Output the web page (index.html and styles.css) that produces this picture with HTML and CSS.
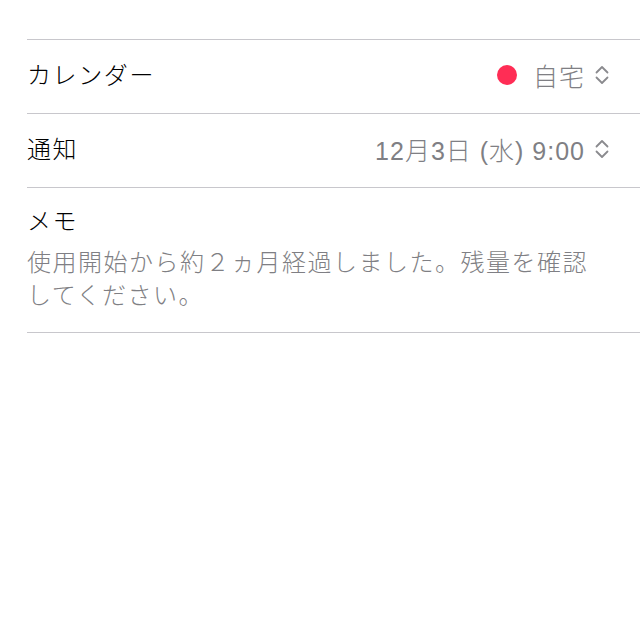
FILE: index.html
```html
<!DOCTYPE html>
<html lang="ja">
<head>
    <meta charset="UTF-8">
    <meta name="viewport" content="width=device-width, initial-scale=1.0">
    <title>イベントの詳細</title>
    <link rel="stylesheet" href="styles.css">
</head>
<body>

    <div class="list">
        <div class="row row-top">
            <span class="placeholder">URL</span>
        </div>

        <div class="row">
            <span class="label">カレンダー</span>
            <span class="value">
                <span class="dot"></span>
                <span>自宅</span>
                <svg class="updown" width="14" height="20" viewBox="0 0 14 20">
                    <path d="M1.5 7.5 L7 2 L12.5 7.5 M1.5 12.5 L7 18 L12.5 12.5" fill="none" stroke="#8a8a8e" stroke-width="1.8" stroke-linecap="round" stroke-linejoin="round"/>
                </svg>
            </span>
        </div>

        <div class="row">
            <span class="label">通知</span>
            <span class="value">
                <span>12月3日 (水) 9:00</span>
                <svg class="updown" width="14" height="20" viewBox="0 0 14 20">
                    <path d="M1.5 7.5 L7 2 L12.5 7.5 M1.5 12.5 L7 18 L12.5 12.5" fill="none" stroke="#8a8a8e" stroke-width="1.8" stroke-linecap="round" stroke-linejoin="round"/>
                </svg>
            </span>
        </div>

        <div class="memo">
            <div class="label">メモ</div>
            <p class="memo-text">使用開始から約２ヵ月経過しました。残量を確認してください。</p>
        </div>
    </div>

</body>
</html>
```

FILE: styles.css
```css
body {
    font-family: "Liberation Sans", "Noto Sans CJK JP", sans-serif;
    font-weight: 300;
    background-color: #fff;
    margin: 0;
    padding: 0;
    overflow: hidden;
}

.list {
    margin-left: 27px;
}

.row {
    display: flex;
    align-items: center;
    justify-content: space-between;
    box-sizing: border-box;
    height: 74px;
    padding: 0 31px 3px 0;
    border-bottom: 1px solid #c8c7cc;
}

.row-top {
    margin-top: -34px;
}

.placeholder {
    font-size: 24px;
    color: #c4c4c7;
    padding-left: 3px;
    position: relative;
    top: -12px;
}

.label {
    font-size: 24px;
    color: #000;
    line-height: 33px;
    letter-spacing: 1.6px;
}

.value {
    display: flex;
    align-items: center;
    font-size: 25px;
    color: #7f7f84;
    letter-spacing: 1px;
}

.dot {
    width: 20px;
    height: 20px;
    border-radius: 50%;
    background-color: #ff2d55;
    margin-right: 16px;
}

.updown {
    margin-left: 10px;
}

.memo {
    padding: 17px 31px 20px 0;
    border-bottom: 1px solid #c8c7cc;
}

.memo-text {
    margin: 8px 0 0;
    font-size: 24px;
    line-height: 33px;
    color: #7f7f84;
    letter-spacing: 1.5px;
    max-width: 572px;
}
```
